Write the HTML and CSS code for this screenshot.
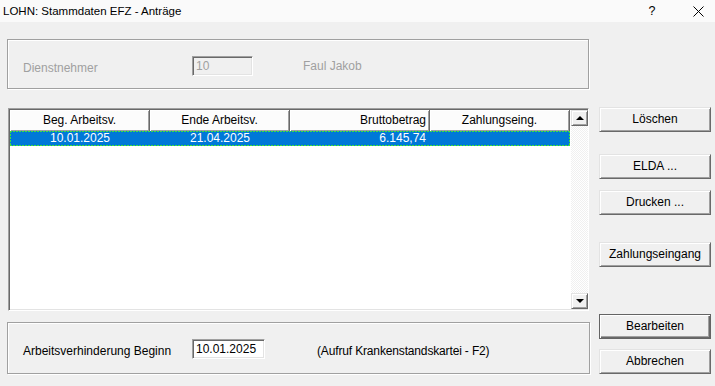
FILE: index.html
```html
<!DOCTYPE html>
<html lang="de">
<head>
<meta charset="utf-8">
<title>LOHN: Stammdaten EFZ - Anträge</title>
<link rel="stylesheet" href="styles.css">
</head>
<body>
<div class="window">
  <div class="titlebar">
    <span class="title">LOHN: Stammdaten EFZ - Anträge</span>
    <span class="help">?</span>
    <span class="close">
      <svg width="11" height="11" viewBox="0 0 11 11"><path d="M0.5 0.5 L10.5 10.5 M10.5 0.5 L0.5 10.5" stroke="#000" stroke-width="1" fill="none"/></svg>
    </span>
  </div>
  <div class="main">
    <div class="left">
      <div class="group group-top">
        <span class="label disabled">Dienstnehmer</span>
        <div class="field field-disabled">10</div>
        <span class="name disabled">Faul Jakob</span>
      </div>
      <div class="list">
        <div class="grid">
          <div class="header">
            <div class="hcell center">Beg. Arbeitsv.</div>
            <div class="hcell center">Ende Arbeitsv.</div>
            <div class="hcell num">Bruttobetrag</div>
            <div class="hcell center">Zahlungseing.</div>
          </div>
          <div class="row selected">
            <div class="cell center">10.01.2025</div>
            <div class="cell center">21.04.2025</div>
            <div class="cell num">6.145,74</div>
            <div class="cell center"></div>
          </div>
        </div>
        <div class="scrollbar">
          <div class="sb-btn"><span class="arrow-up"></span></div>
          <div class="sb-track"></div>
          <div class="sb-btn"><span class="arrow-down"></span></div>
        </div>
      </div>
      <div class="group group-bottom">
        <span class="label">Arbeitsverhinderung Beginn</span>
        <div class="field field-date">10.01.2025</div>
        <span class="hint">(Aufruf Krankenstandskartei - F2)</span>
      </div>
    </div>
    <div class="right">
      <button class="btn btn-loeschen">Löschen</button>
      <button class="btn btn-elda">ELDA ...</button>
      <button class="btn btn-drucken">Drucken ...</button>
      <button class="btn btn-zahlung">Zahlungseingang</button>
      <button class="btn btn-default btn-bearbeiten">Bearbeiten</button>
      <button class="btn btn-abbrechen">Abbrechen</button>
    </div>
  </div>
</div>
</body>
</html>
```

FILE: styles.css
```css
* { box-sizing: border-box; }
html, body {
  margin: 0;
  padding: 0;
  background: #f0f0f0;
  font-family: "Liberation Sans", Arial, sans-serif;
  font-size: 12px;
  color: #000;
}
.window {
  width: 715px;
  height: 386px;
  overflow: hidden;
}
.titlebar {
  height: 22px;
  display: flex;
  align-items: center;
  background: #fafafa;
  padding-left: 3px;
}
.title {
  font-size: 11.5px;
  line-height: 22px;
}
.help {
  margin-left: auto;
  width: 20px;
  text-align: center;
  font-size: 12.5px;
  line-height: 22px;
}
.close {
  width: 30px;
  margin-left: 21px;
  margin-right: 2px;
  display: flex;
  align-items: center;
  justify-content: center;
  height: 22px;
}
.close svg { display: block; }

.main {
  display: flex;
  padding-left: 7px;
}
.left {
  width: 583px;
  display: flex;
  flex-direction: column;
}
.right {
  margin-left: 9px;
  width: 112px;
  display: flex;
  flex-direction: column;
}

/* Group boxes (etched frame) */
.group {
  border: 1px solid #a0a0a0;
  box-shadow: 1px 1px 0 #fff, inset 1px 1px 0 #fff;
  display: flex;
  align-items: flex-start;
  padding: 16px 0 0 15px;
}
.group-top {
  margin-top: 17px;
  width: 582px;
  height: 50px;
}
.group-bottom {
  margin-top: 11px;
  width: 583px;
  height: 52px;
}
.label {
  flex: 0 0 169px;
  line-height: 20px;
  margin-top: 2px;
}
.disabled { color: #a0a0a0; }
.name {
  margin-left: 50px;
  line-height: 20px;
}
.hint {
  margin-left: 52px;
  line-height: 20px;
  margin-top: 2px;
  letter-spacing: -0.15px;
}
.field {
  height: 20px;
  border: 1px solid;
  border-color: #a0a0a0 #fff #fff #a0a0a0;
  box-shadow: inset 1px 1px 0 #696969, inset -1px -1px 0 #e3e3e3;
  padding: 1px 0 0 3px;
  line-height: 17px;
}
.field-disabled {
  width: 61px;
  background: #f0f0f0;
  color: #a0a0a0;
}
.field-date {
  width: 73px;
  background: #fff;
}

/* List view */
.list {
  margin-top: 19px;
  margin-left: 1px;
  width: 581px;
  height: 203px;
  border: 1px solid;
  border-color: #a0a0a0 #fff #fff #a0a0a0;
  box-shadow: inset 1px 1px 0 #696969, inset -1px -1px 0 #e3e3e3;
  background: #fff;
  padding: 1px;
  display: flex;
}
.grid {
  flex: 0 0 560px;
  display: flex;
  flex-direction: column;
}
.header {
  display: flex;
  height: 21px;
  background: #fcfcfc;
}
.hcell {
  flex: 0 0 140px;
  height: 21px;
  line-height: 21px;
  border-right: 1px solid #696969;
  box-shadow: inset 1px 1px 0 #fff, inset -1px -1px 0 #a0a0a0;
  white-space: nowrap;
  overflow: hidden;
}
.center { text-align: center; }
.num { text-align: right; padding-right: 3px; }
.row {
  display: flex;
  height: 15px;
  line-height: 15px;
  position: relative;
}
.row.selected {
  background: #0078d7;
  color: #fff;
}
.row.selected::after {
  content: "";
  position: absolute;
  inset: 0;
  pointer-events: none;
  background:
    repeating-linear-gradient(90deg, #3ee03e 0 2px, transparent 2px 3px) top left / 100% 1px no-repeat,
    repeating-linear-gradient(90deg, #3ee03e 0 2px, transparent 2px 3px) bottom left / 100% 1px no-repeat,
    repeating-linear-gradient(180deg, #3ee03e 0 2px, transparent 2px 3px) top left / 1px 100% no-repeat,
    repeating-linear-gradient(180deg, #3ee03e 0 2px, transparent 2px 3px) top right / 1px 100% no-repeat;
}
.cell {
  flex: 0 0 140px;
  white-space: nowrap;
}
.cell.num { padding-right: 4px; }

/* Scrollbar */
.scrollbar {
  flex: 0 0 17px;
  display: flex;
  flex-direction: column;
  margin-left: 1px;
}
.sb-btn {
  height: 16px;
  background: #f0f0f0;
  border: 1px solid;
  border-color: #e3e3e3 #696969 #696969 #e3e3e3;
  box-shadow: inset 1px 1px 0 #fff, inset -1px -1px 0 #a0a0a0;
  display: flex;
  align-items: center;
  justify-content: center;
}
.sb-track {
  flex: 1;
  background-color: #fff;
  background-image: repeating-conic-gradient(#f0f0f0 0 25%, #fff 0 50%);
  background-size: 2px 2px;
}
.arrow-up, .arrow-down {
  width: 0;
  height: 0;
  border-left: 4px solid transparent;
  border-right: 4px solid transparent;
}
.arrow-up { border-bottom: 4px solid #000; }
.arrow-down { border-top: 4px solid #000; }

/* Buttons */
.btn {
  width: 112px;
  height: 25px;
  padding: 0;
  font-family: "Liberation Sans", Arial, sans-serif;
  font-size: 12px;
  color: #000;
  background: #f0f0f0;
  border: 1px solid;
  border-color: #e3e3e3 #696969 #696969 #e3e3e3;
  box-shadow: inset 1px 1px 0 #fff, inset -1px -1px 0 #a0a0a0;
  line-height: 21px;
  text-align: center;
}
.btn-default {
  border-color: #646464;
  box-shadow: inset 1px 1px 0 #fff, inset -1px -1px 0 #696969, inset -2px -2px 0 #a0a0a0;
}
.btn-loeschen { margin-top: 85px; }
.btn-elda { margin-top: 22px; }
.btn-drucken { margin-top: 11px; }
.btn-zahlung { margin-top: 27px; }
.btn-bearbeiten { margin-top: 47px; }
.btn-abbrechen { margin-top: 10px; }
```
